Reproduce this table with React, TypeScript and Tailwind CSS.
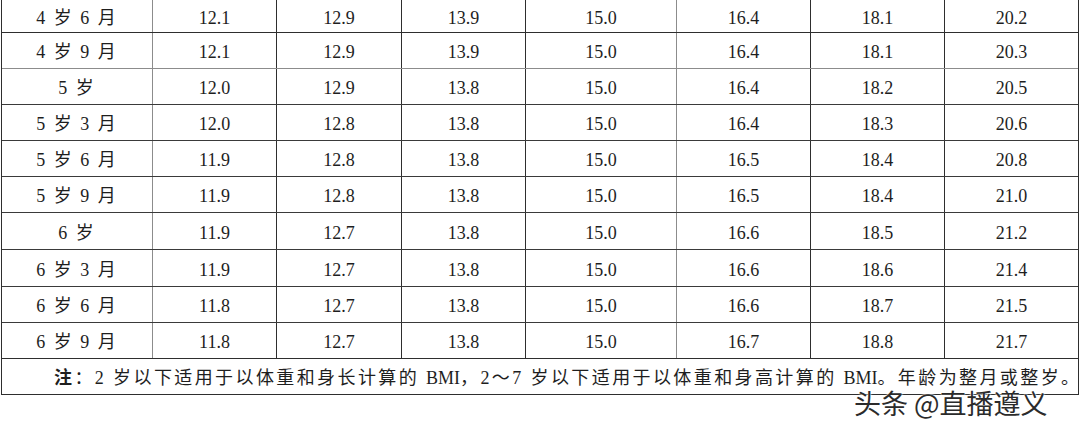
const rows: { age: string; h: string; line: string; v: string[] }[] = [
  { age: "4 岁 6 月", h: "h-[33px]", line: "border-[#2e2e2e]", v: ["12.1", "12.9", "13.9", "15.0", "16.4", "18.1", "20.2"] },
  { age: "4 岁 9 月", h: "h-[36px]", line: "border-[#8c8c8c]", v: ["12.1", "12.9", "13.9", "15.0", "16.4", "18.1", "20.3"] },
  { age: "5 岁", h: "h-[36px]", line: "border-[#3a3a3a]", v: ["12.0", "12.9", "13.8", "15.0", "16.4", "18.2", "20.5"] },
  { age: "5 岁 3 月", h: "h-[36px]", line: "border-[#3a3a3a]", v: ["12.0", "12.8", "13.8", "15.0", "16.4", "18.3", "20.6"] },
  { age: "5 岁 6 月", h: "h-[36px]", line: "border-[#3a3a3a]", v: ["11.9", "12.8", "13.8", "15.0", "16.5", "18.4", "20.8"] },
  { age: "5 岁 9 月", h: "h-[36px]", line: "border-[#3a3a3a]", v: ["11.9", "12.8", "13.8", "15.0", "16.5", "18.4", "21.0"] },
  { age: "6 岁", h: "h-[37px]", line: "border-[#3a3a3a]", v: ["11.9", "12.7", "13.8", "15.0", "16.6", "18.5", "21.2"] },
  { age: "6 岁 3 月", h: "h-[37px]", line: "border-[#3a3a3a]", v: ["11.9", "12.7", "13.8", "15.0", "16.6", "18.6", "21.4"] },
  { age: "6 岁 6 月", h: "h-[36px]", line: "border-[#3a3a3a]", v: ["11.8", "12.7", "13.8", "15.0", "16.6", "18.7", "21.5"] },
  { age: "6 岁 9 月", h: "h-[36px]", line: "border-[#2e2e2e]", v: ["11.8", "12.7", "13.8", "15.0", "16.7", "18.8", "21.7"] },
];

// value columns: width incl. right border, and the border colour
const cols = [
  "w-[124px] border-r border-[#2e2e2e]",
  "w-[125px] border-r border-[#2e2e2e]",
  "w-[124px] border-r border-[#2e2e2e]",
  "w-[151px] border-r border-[#8c8c8c]",
  "w-[134px] border-r border-[#2e2e2e]",
  "w-[134px] border-r border-[#2e2e2e]",
  "flex-1",
];

const font = { fontFamily: '"Liberation Serif", "Noto Sans CJK SC", serif' };

export default function App() {
  return (
    <div className="relative w-[1080px] h-[427px] overflow-hidden bg-white text-[#1e1e1e]" style={font}>
      <div className="ml-px w-[1078px] border-l border-r border-[#2e2e2e]">
        {rows.map((r) => (
          <div key={r.age} className={`flex border-b ${r.h} ${r.line}`}>
            <div className="w-[151px] border-r border-[#8c8c8c] flex items-center justify-center pt-[3px] text-[18px] leading-none tracking-[2px] whitespace-pre">
              {r.age}
            </div>
            {r.v.map((n, i) => (
              <div key={i} className={`${cols[i]} flex items-center justify-center pt-[3px] text-[18px] leading-none`}>
                {n}
              </div>
            ))}
          </div>
        ))}
        <div className="h-[36px] border-b border-[#2e2e2e] flex items-center pl-[52px] pt-[3px] text-[18px] leading-none tracking-[2.4px] whitespace-pre">
          <span className="font-bold">注</span>：2 岁以下适用于以体重和身长计算的 <span className="tracking-normal">BMI</span>，2〜7 岁以下适用于以体重和身高计算的 <span className="tracking-normal">BMI</span>。年龄为整月或整岁。
        </div>
      </div>
      <div
        className="absolute left-[854px] top-[389px] text-[27px] leading-none text-[#2b2b2b] whitespace-nowrap"
        style={{ fontFamily: '"Noto Sans CJK SC", sans-serif', textShadow: "0 0 2px #fff, 0 0 2px #fff" }}
      >
        头条 @直播遵义
      </div>
    </div>
  );
}
